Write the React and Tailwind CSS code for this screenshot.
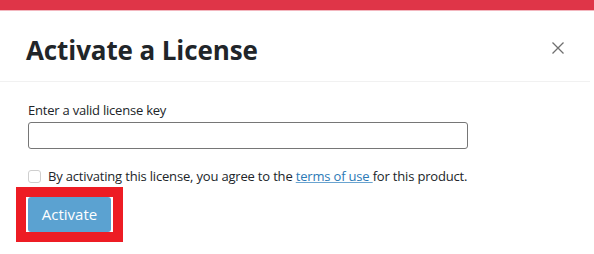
export default function App() {
  return (
    <div className="w-[594px] h-[254px] bg-white overflow-hidden font-['Open_Sans',sans-serif] text-[#212529]">
      <div className="h-[10px] bg-[#df3548]" />
      <div className="h-px bg-[#f3b7bf]" />

      {/* header */}
      <div className="mr-[4px] flex items-start justify-between border-b border-[#f1f1f1] pl-[26px] pr-[26px] pt-[23px] pb-[15px]">
        <h1 className="text-[26px] leading-[32px] font-bold tracking-[-0.1px]">Activate a License</h1>
        <button className="mt-[8px] w-[12px] h-[12px] text-[#6f6f6f]">
          <svg width="12" height="12" viewBox="0 0 12 12">
            <path d="M0.5 0.5 L11.5 11.5 M11.5 0.5 L0.5 11.5" stroke="currentColor" strokeWidth="1.3" fill="none" />
          </svg>
        </button>
      </div>

      {/* body */}
      <div className="flex flex-col pl-[28px] pt-[18px]">
        <label className="text-[13px] leading-[20px] tracking-[-0.22px] mb-[2px]">Enter a valid license key</label>
        <input className="w-[440px] h-[27px] border border-[#767676] rounded-[3px] px-2 text-[13px] outline-none" />

        <div className="mt-[17px] flex items-center gap-[7px] text-[13px] leading-[20px] tracking-[-0.18px]">
          <span className="w-[13px] h-[13px] rounded-[3px] border border-[#cfcfcf] bg-white" />
          <span>
            By activating this license, you agree to the{" "}
            <a className="text-[#2c7ab6] underline decoration-[#6aa4d0]">terms of use </a>
            for this product.
          </span>
        </div>

        <div className="mt-[1px] ml-[-12px] w-[107px] h-[55px] border-[10px] border-[#ed1c24] flex">
          <div className="flex-1 px-[2px] bg-white">
            <button className="w-full h-full bg-[#5ba2d1] rounded-[3px] text-white text-[15px]">Activate</button>
          </div>
        </div>
      </div>
    </div>
  );
}
